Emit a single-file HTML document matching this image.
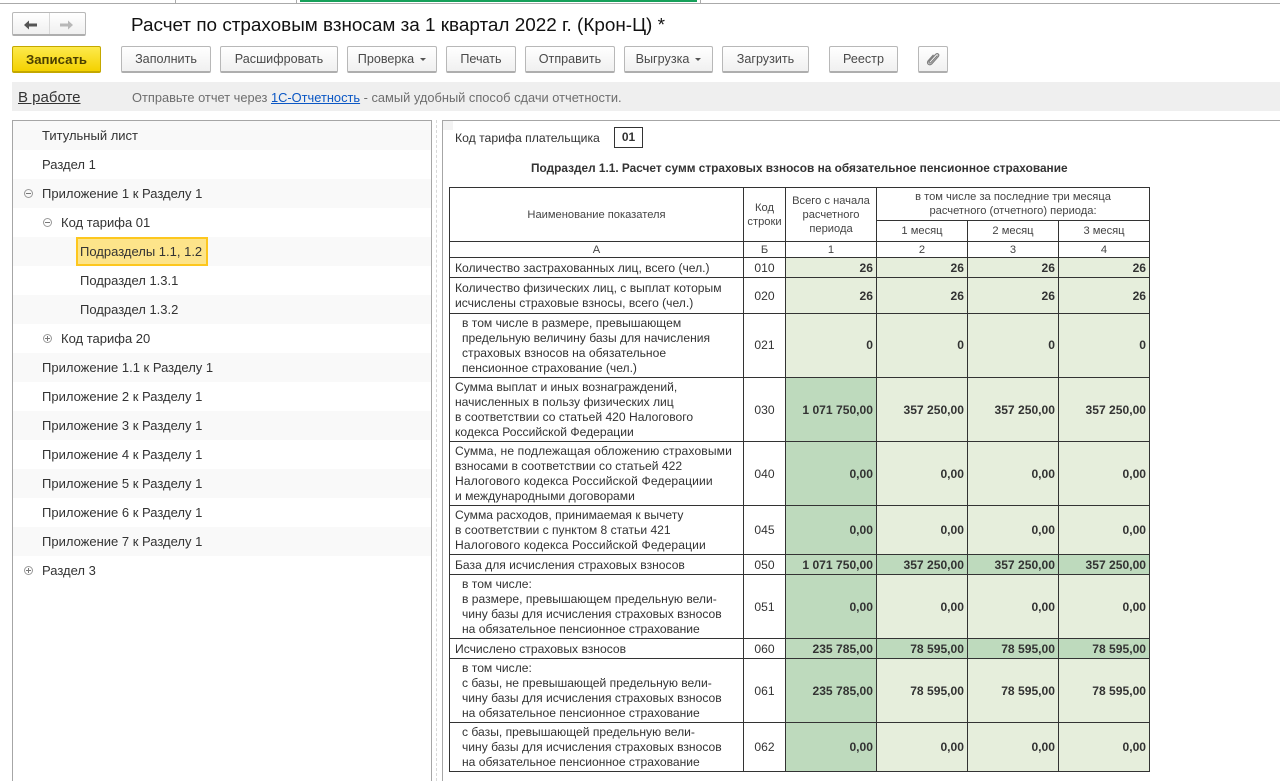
<!DOCTYPE html>
<html lang="ru"><head><meta charset="utf-8"><title>Расчет по страховым взносам</title>
<style>
*{box-sizing:border-box}
html,body{margin:0;padding:0;background:#fff}
body{width:1280px;height:781px;position:relative;overflow:hidden;font-family:"Liberation Sans",sans-serif;color:#333}
.a{position:absolute}
.btn{position:absolute;top:46px;height:27px;border:1px solid #b8b8b8;border-bottom:2px solid #aeaeae;border-radius:2px;background:linear-gradient(#fff,#f0f0f0);font-size:12.6px;color:#4a4a4a;text-align:center;line-height:25px;white-space:nowrap}
.car{display:inline-block;width:0;height:0;border:3px solid transparent;border-top:3px solid #555;border-bottom:0;margin-left:6px;vertical-align:2px}
.row{position:absolute;left:13px;width:418px;height:29px;font-size:13px;line-height:29px;color:#333;white-space:nowrap}
.s{background:#f9f9f9}
.row span,.row svg{position:absolute}
.row svg{top:10px}
table{position:absolute;left:449px;top:187px;border-collapse:collapse;table-layout:fixed;width:700px;font-size:12.1px}
td{border:1px solid #333;padding:0;line-height:15px;overflow:hidden;white-space:nowrap}
.h{font-size:11.15px;line-height:14px;text-align:center;color:#444}
.t{padding-left:5px;color:#333}
.i{padding-left:12px}
.c{text-align:center;padding-top:2px}
.n{text-align:right;padding-right:3px;padding-top:2px;font-weight:bold;background:#e6eedc}
.d{background:#bedabd}
.o td{padding-top:2px}
.z td{padding-top:0}
.w{letter-spacing:.12px}
</style></head><body>
<div class="a" style="left:0;top:3px;width:1280px;height:1px;background:#aaa"></div>
<div class="a" style="left:175px;top:0;width:1px;height:3px;background:#aaa"></div>
<div class="a" style="left:296px;top:0;width:1px;height:3px;background:#aaa"></div>
<div class="a" style="left:700px;top:0;width:1px;height:3px;background:#aaa"></div>
<div class="a" style="left:300px;top:0;width:397px;height:2px;background:#16a05a"></div>

<div class="a" style="left:12px;top:12px;width:74px;height:24px;border:1px solid #b8b8b8;border-bottom:2px solid #aeaeae;border-radius:2px;background:linear-gradient(#fff,#f0f0f0)"></div>
<div class="a" style="left:49px;top:13px;width:1px;height:21px;background:#d8d8d8"></div>
<svg class="a" style="left:23px;top:18.500px" width="16" height="12" viewBox="0 0 16 12"><path d="M1 6L6 1.500V4.500H14V7.500H6V10.500Z" fill="#555"/></svg>
<svg class="a" style="left:58px;top:18.500px" width="16" height="12" viewBox="0 0 16 12"><path d="M15 6L10 1.500V4.500H2V7.500H10V10.500Z" fill="#b8b8b8"/></svg>
<div class="a" style="left:131px;top:15px;font-size:18.9px;line-height:22px;color:#111;white-space:nowrap">Расчет по страховым взносам за 1 квартал 2022 г. (Крон-Ц) *</div>

<div class="btn" style="left:12px;width:89px;background:linear-gradient(#fdea4c,#f4d200);border-color:#c4a800;color:#4a3f00;font-weight:bold;font-size:13.2px">Записать</div>
<div class="btn" style="left:121px;width:90px">Заполнить</div>
<div class="btn" style="left:220px;width:118px">Расшифровать</div>
<div class="btn" style="left:347px;width:90px">Проверка<i class="car"></i></div>
<div class="btn" style="left:446px;width:70px">Печать</div>
<div class="btn" style="left:525px;width:90px">Отправить</div>
<div class="btn" style="left:624px;width:89px">Выгрузка<i class="car"></i></div>
<div class="btn" style="left:722px;width:87px">Загрузить</div>
<div class="btn" style="left:829px;width:69px">Реестр</div>
<div class="btn" style="left:918px;width:30px"></div>
<svg class="a" style="left:925px;top:51px" width="16" height="16" viewBox="0 0 16 16"><path d="M12.500 4.500L6 11.500C4.800 12.800 3.300 11.500 4.400 10.200L10.500 3.500C12.500 1.500 15 3.700 13 5.900L6.800 12.800C4.500 15.200 1 12.500 3.200 9.800L8.500 3.800" fill="none" stroke="#808080" stroke-width="1.200"/></svg>

<div class="a" style="left:12px;top:82px;width:1268px;height:29px;background:#efefef"></div>
<div class="a" style="left:18px;top:89px;font-size:15px;line-height:17px;color:#333;text-decoration:underline">В работе</div>
<div class="a" style="left:132px;top:90px;font-size:12.85px;line-height:15px;color:#6e6e6e;white-space:nowrap">Отправьте отчет через <span style="color:#0b57c4;text-decoration:underline">1С-Отчетность</span> - самый удобный способ сдачи отчетности.</div>

<div class="a" style="left:12px;top:120px;width:420px;height:661px;border:1px solid #a6a6a6;border-bottom:0"></div>
<div class="a" style="left:436px;top:120px;height:661px;border-left:1px dashed #d8d8d8"></div>
<div class="a" style="left:442px;top:120px;width:838px;height:661px;border-top:1px solid #a6a6a6;border-left:1px solid #a6a6a6"></div>
<div class="a" style="left:443px;top:121px;width:10px;height:9px;background:#f3f3f3"></div>

<div class="row s" style="top:121px"><span style="left:29px">Титульный лист</span></div>
<div class="row" style="top:150px"><span style="left:29px">Раздел 1</span></div>
<div class="row s" style="top:179px"><svg style="left:11px" width="9" height="9" viewBox="0 0 9 9"><circle cx="4.500" cy="4.500" r="4" fill="none" stroke="#999"/><path d="M2 4.500H7" stroke="#777"/></svg><span style="left:29px">Приложение 1 к Разделу 1</span></div>
<div class="row" style="top:208px"><svg style="left:30px" width="9" height="9" viewBox="0 0 9 9"><circle cx="4.500" cy="4.500" r="4" fill="none" stroke="#999"/><path d="M2 4.500H7" stroke="#777"/></svg><span style="left:48px">Код тарифа 01</span></div>
<div class="row s" style="top:237px"><span style="left:63px;top:0;width:132px;height:29px;background:#fde48a;border:2px solid #fdc71e;line-height:25px;padding-left:2px">Подразделы 1.1, 1.2</span></div>
<div class="row" style="top:266px"><span style="left:67px">Подраздел 1.3.1</span></div>
<div class="row s" style="top:295px"><span style="left:67px">Подраздел 1.3.2</span></div>
<div class="row" style="top:324px"><svg style="left:30px" width="9" height="9" viewBox="0 0 9 9"><circle cx="4.500" cy="4.500" r="4" fill="none" stroke="#999"/><path d="M2 4.500H7M4.500 2V7" stroke="#777"/></svg><span style="left:48px">Код тарифа 20</span></div>
<div class="row s" style="top:353px"><span style="left:29px">Приложение 1.1 к Разделу 1</span></div>
<div class="row" style="top:382px"><span style="left:29px">Приложение 2 к Разделу 1</span></div>
<div class="row s" style="top:411px"><span style="left:29px">Приложение 3 к Разделу 1</span></div>
<div class="row" style="top:440px"><span style="left:29px">Приложение 4 к Разделу 1</span></div>
<div class="row s" style="top:469px"><span style="left:29px">Приложение 5 к Разделу 1</span></div>
<div class="row" style="top:498px"><span style="left:29px">Приложение 6 к Разделу 1</span></div>
<div class="row s" style="top:527px"><span style="left:29px">Приложение 7 к Разделу 1</span></div>
<div class="row" style="top:556px"><svg style="left:11px" width="9" height="9" viewBox="0 0 9 9"><circle cx="4.500" cy="4.500" r="4" fill="none" stroke="#999"/><path d="M2 4.500H7M4.500 2V7" stroke="#777"/></svg><span style="left:29px">Раздел 3</span></div>

<div class="a" style="left:455px;top:131px;font-size:12.2px;line-height:15px;color:#333">Код тарифа плательщика</div>
<div class="a" style="left:614px;top:127px;width:29px;height:21px;border:1px solid #333;font-size:12px;font-weight:bold;line-height:19px;text-align:center">01</div>
<div class="a" style="left:531px;top:161px;font-size:11.85px;line-height:15px;font-weight:bold;white-space:nowrap">Подраздел 1.1. Расчет сумм страховых взносов на обязательное пенсионное страхование</div>

<table>
<colgroup><col style="width:294px"><col style="width:42px"><col style="width:91px"><col style="width:91px"><col style="width:91px"><col style="width:91px"></colgroup>
<tr style="height:33px"><td class="h" rowspan="2">Наименование показателя</td><td class="h" rowspan="2">Код<br>строки</td><td class="h" rowspan="2">Всего с начала<br>расчетного<br>периода</td><td class="h" colspan="3">в том числе за последние три месяца<br>расчетного (отчетного) периода:</td></tr>
<tr style="height:21px"><td class="h">1 месяц</td><td class="h">2 месяц</td><td class="h">3 месяц</td></tr>
<tr style="height:16px"><td class="h">А</td><td class="h">Б</td><td class="h">1</td><td class="h">2</td><td class="h">3</td><td class="h">4</td></tr>
<tr class="o" style="height:20px"><td class="t">Количество застрахованных лиц, всего (чел.)</td><td class="c">010</td><td class="n">26</td><td class="n">26</td><td class="n">26</td><td class="n">26</td></tr>
<tr style="height:36px"><td class="t">Количество физических лиц, с выплат которым<br>исчислены страховые взносы, всего (чел.)</td><td class="c">020</td><td class="n">26</td><td class="n">26</td><td class="n">26</td><td class="n">26</td></tr>
<tr class="z" style="height:64px"><td class="t i">в том числе в размере, превышающем<br>предельную величину базы для начисления<br>страховых взносов на обязательное<br>пенсионное страхование (чел.)</td><td class="c">021</td><td class="n">0</td><td class="n">0</td><td class="n">0</td><td class="n">0</td></tr>
<tr style="height:64px"><td class="t">Сумма выплат и иных вознаграждений,<br>начисленных в пользу физических лиц<br>в соответствии со статьей 420 Налогового<br>кодекса Российской Федерации</td><td class="c">030</td><td class="n d">1 071 750,00</td><td class="n">357 250,00</td><td class="n">357 250,00</td><td class="n">357 250,00</td></tr>
<tr style="height:64px"><td class="t"><span class="w">Сумма, не подлежащая обложению страховыми</span><br>взносами в соответствии со статьей 422<br><span class="w">Налогового кодекса Российской Федерациии</span><br>и международными договорами</td><td class="c">040</td><td class="n d">0,00</td><td class="n">0,00</td><td class="n">0,00</td><td class="n">0,00</td></tr>
<tr class="z" style="height:49px"><td class="t">Сумма расходов, принимаемая к вычету<br>в соответствии с пунктом 8 статьи 421<br><span class="w">Налогового кодекса Российской Федерации</span></td><td class="c">045</td><td class="n d">0,00</td><td class="n">0,00</td><td class="n">0,00</td><td class="n">0,00</td></tr>
<tr class="o" style="height:20px"><td class="t">База для исчисления страховых взносов</td><td class="c">050</td><td class="n d">1 071 750,00</td><td class="n d">357 250,00</td><td class="n d">357 250,00</td><td class="n d">357 250,00</td></tr>
<tr style="height:64px"><td class="t i">в том числе:<br>в размере, превышающем предельную вели-<br>чину базы для исчисления страховых взносов<br>на обязательное пенсионное страхование</td><td class="c">051</td><td class="n d">0,00</td><td class="n">0,00</td><td class="n">0,00</td><td class="n">0,00</td></tr>
<tr class="o" style="height:20px"><td class="t">Исчислено страховых взносов</td><td class="c">060</td><td class="n d">235 785,00</td><td class="n d">78 595,00</td><td class="n d">78 595,00</td><td class="n d">78 595,00</td></tr>
<tr style="height:64px"><td class="t i">в том числе:<br>с базы, не превышающей предельную вели-<br>чину базы для исчисления страховых взносов<br>на обязательное пенсионное страхование</td><td class="c">061</td><td class="n d">235 785,00</td><td class="n">78 595,00</td><td class="n">78 595,00</td><td class="n">78 595,00</td></tr>
<tr class="z" style="height:49px"><td class="t i">с базы, превышающей предельную вели-<br>чину базы для исчисления страховых взносов<br>на обязательное пенсионное страхование</td><td class="c">062</td><td class="n d">0,00</td><td class="n">0,00</td><td class="n">0,00</td><td class="n">0,00</td></tr>
</table>
</body></html>
